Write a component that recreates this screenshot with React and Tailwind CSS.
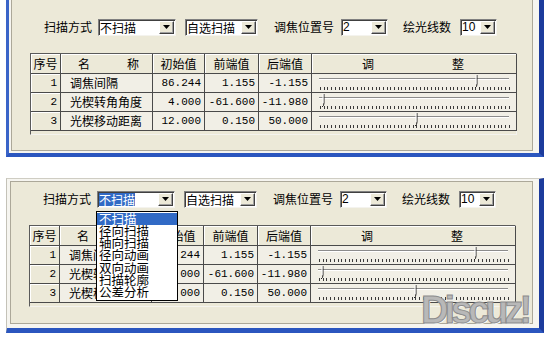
import React from 'react';

const rows = [
  { no: 1, name: '调焦间隔', init: '86.244', front: '1.155', back: '-1.155', pos: 165 },
  { no: 2, name: '光楔转角角度', init: '4.000', front: '-61.600', back: '-11.980', pos: 12 },
  { no: 3, name: '光楔移动距离', init: '12.000', front: '0.150', back: '50.000', pos: 105 },
];

const menuItems = ['不扫描', '径向扫描', '轴向扫描', '径向动画', '双向动画', '扫描轮廓', '公差分析'];

function Combo({ className, children, menu }) {
  return (
    <div
      className={`relative flex h-[17px] items-stretch border border-t-[#808080] border-l-[#808080] border-b-[#f4f3ee] border-r-[#f4f3ee] bg-white shadow-[inset_1px_1px_0_#404040] ${className}`}
    >
      <div className="flex flex-1 items-center overflow-hidden whitespace-nowrap pl-[1px] text-[12px] leading-[13px]">
        {children}
      </div>
      <div className="my-[1px] mr-[1px] flex w-[15px] items-center justify-center border border-t-white border-l-white border-b-[#404040] border-r-[#404040] bg-[#ece9d8] shadow-[inset_-1px_-1px_0_#a0a0a0]">
        <svg width="7" height="4" viewBox="0 0 7 4">
          <path d="M0 0h7L3.5 4z" fill="#000" />
        </svg>
      </div>
      {menu && (
        <div className="absolute left-[-2px] top-[19px] z-10 w-[82px] border border-black bg-white py-[1px] text-[12.5px] leading-[12.3px]">
          {menuItems.map((m, i) => (
            <div
              key={m}
              className={`pl-[2px] ${i === 0 ? 'bg-[#316ac5] text-white' : 'text-black'}`}
            >
              {m}
            </div>
          ))}
        </div>
      )}
    </div>
  );
}

function Slider({ pos }) {
  const ticks = [];
  for (let i = 0; i < 52; i++) ticks.push(Math.round(8 + i * 3.7));
  return (
    <svg width="204" height="18" viewBox="0 0 204 18">
      <rect x="7" y="4" width="190" height="1" fill="#8c8c8c" />
      <rect x="7" y="5" width="190" height="1" fill="#ffffff" />
      {ticks.map((x) => (
        <rect key={x} x={x} y="13" width="1" height="3" fill="#3a3a3a" />
      ))}
      <path d={`M${pos} 1 V10 Q${pos} 13 ${pos - 2} 14`} stroke="#222" strokeWidth="1" fill="none" />
      <path d={`M${pos - 1} 1 V10`} stroke="#fff" strokeWidth="1" />
    </svg>
  );
}

function Grid() {
  const fixed = 'bg-[#ece9d8] border-r border-b border-[#4a4a4a] shadow-[inset_1px_1px_0_#fff]';
  const cell = 'bg-[#f1efe6] border-r border-b border-[#4a4a4a]';
  const num = "flex items-center justify-end pr-[3px] font-['Liberation_Mono',monospace] text-[11px]";
  return (
    <div className="ml-[18px] w-[487px] border border-t-[#5a5a5a] border-l-[#5a5a5a] border-r-[#f4f3ee] border-b-[#f4f3ee] bg-[#ece9d8]">
      <div className="grid grid-cols-[30px_92px_52px_54px_53px_205px] text-[12px]">
        <div className={`${fixed} flex h-[20px] items-center justify-center`}>序号</div>
        <div className={`${fixed} flex items-center justify-between pl-[17px] pr-[13px]`}>
          <span>名</span>
          <span>称</span>
        </div>
        <div className={`${fixed} flex items-center justify-center`}>初始值</div>
        <div className={`${fixed} flex items-center justify-center`}>前端值</div>
        <div className={`${fixed} flex items-center justify-center`}>后端值</div>
        <div className={`${fixed} flex items-center justify-between pl-[50px] pr-[52px]`}>
          <span>调</span>
          <span>整</span>
        </div>
        {rows.map((r) => (
          <React.Fragment key={r.no}>
            <div className={`${fixed} ${num} h-[19px]`}>{r.no}</div>
            <div className={`${cell} flex items-center pl-[9px]`}>{r.name}</div>
            <div className={`${cell} ${num}`}>{r.init}</div>
            <div className={`${cell} ${num}`}>{r.front}</div>
            <div className={`${cell} ${num}`}>{r.back}</div>
            <div className={`${cell} flex items-start`}>
              <Slider pos={r.pos} />
            </div>
          </React.Fragment>
        ))}
      </div>
      <div className="h-[3px]" />
    </div>
  );
}

function Toolbar({ open }) {
  return (
    <div className="flex items-center text-[12px]">
      <span className="ml-[32px]">扫描方式</span>
      <Combo className="ml-[6px] w-[78px]" menu={open}>
        {open ? <span className="bg-[#316ac5] text-white">不扫描</span> : '不扫描'}
      </Combo>
      <Combo className="ml-[9px] w-[73px]">自选扫描</Combo>
      <span className="ml-[16px]">调焦位置号</span>
      <Combo className="ml-[7px] w-[47px]">
        <span className="font-['Liberation_Sans',sans-serif]">2</span>
      </Combo>
      <span className="ml-[15px]">绘光线数</span>
      <Combo className="ml-[9px] w-[37px]">
        <span className="font-['Liberation_Sans',sans-serif]">10</span>
      </Combo>
    </div>
  );
}

export default function App() {
  return (
    <div className="relative h-[337px] w-[548px] overflow-hidden bg-white font-['Noto_Sans_CJK_SC','Noto_Sans',sans-serif] text-black">
      {/* upper window, top cut off */}
      <div className="ml-[6px] h-[157px] w-[538px] border-b-[4px] border-l-[3px] border-r-[5px] border-b-[#2b56bf] border-l-[#3a64c8] border-r-[#1c3b9c] bg-[#f6f5f0] pb-[2px] pl-[2px] pr-[6px]">
        <div className="h-full border-b border-l border-r border-[#aca899] bg-[#ece9d8] pt-[18px]">
          <Toolbar />
          <div className="mt-[17px]">
            <Grid />
          </div>
        </div>
      </div>

      {/* lower window with open dropdown */}
      <div className="ml-[6px] mt-[21px] h-[155px] w-[538px] border-b-[5px] border-l border-r-[5px] border-t border-b-[#2b56bf] border-l-[#c4c2b8] border-r-[#1c3b9c] border-t-[#cfcdc3] bg-[#f6f5f0] pb-[4px] pl-[3px] pr-[6px] pt-[2px]">
        <div className="h-full border border-[#aca899] bg-[#ece9d8] pt-[8px]">
          <Toolbar open />
          <div className="mt-[17px]">
            <Grid />
          </div>
        </div>
      </div>

      <div className="absolute left-[421px] top-[291px] font-['Liberation_Sans',sans-serif] text-[38px] font-bold leading-none tracking-[-4px] text-[#b8b8b8] [-webkit-text-stroke:1px_#8c8c8c] [text-shadow:1px_1px_0_#fff]">
        Discuz!
      </div>
    </div>
  );
}
